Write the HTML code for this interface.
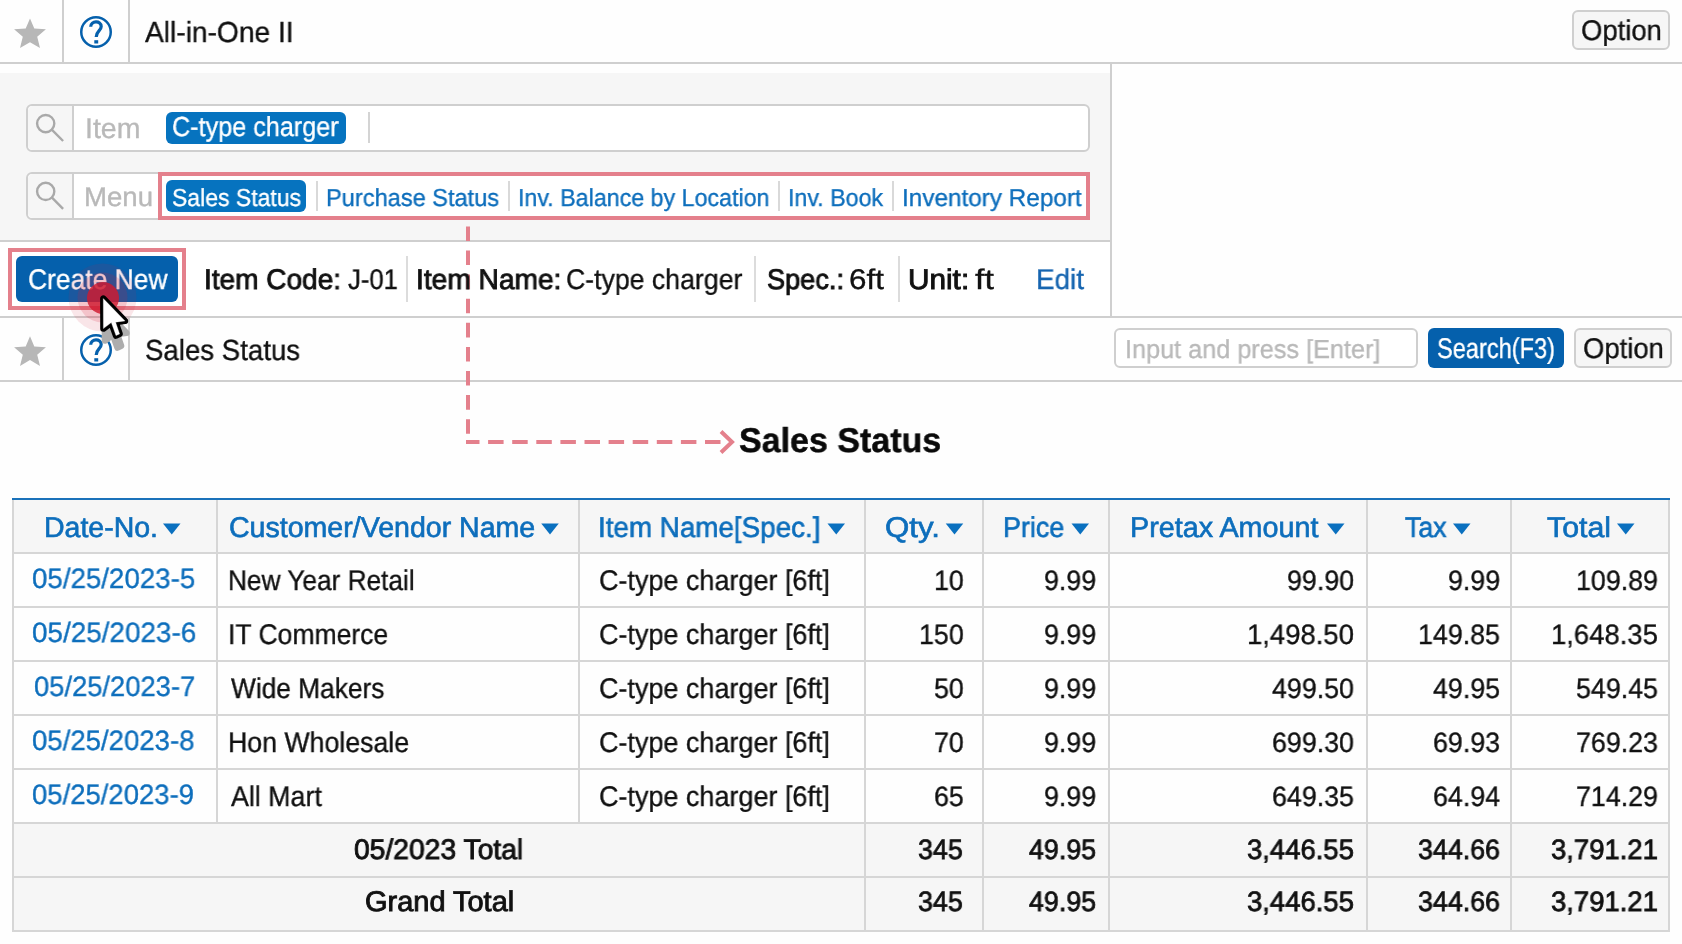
<!DOCTYPE html>
<html><head><meta charset="utf-8"><title>Sales Status</title>
<style>
html,body{margin:0;padding:0;}
body{width:1682px;height:944px;position:relative;overflow:hidden;background:#fefefe;font-family:"Liberation Sans", sans-serif;}
.b{position:absolute;}
.t{position:absolute;white-space:pre;line-height:1;transform-origin:0 0;display:block;font-family:"Liberation Sans", sans-serif;will-change:transform;text-rendering:geometricPrecision;}
.ov{position:absolute;left:0;top:0;}
</style></head><body>
<div class="b" style="left:0px;top:62px;width:1682px;height:2px;background:#cfcfcf"></div>
<div class="b" style="left:62px;top:0px;width:2px;height:63px;background:#cfcfcf"></div>
<div class="b" style="left:128px;top:0px;width:2px;height:63px;background:#cfcfcf"></div>
<div class="b" style="left:1572px;top:10px;width:98px;height:40px;box-sizing:border-box;border:2px solid #cfcfcf;border-radius:6px;background:#f6f6f6"></div>
<div class="b" style="left:0px;top:73px;width:1110px;height:168px;background:#f6f6f6"></div>
<div class="b" style="left:1110px;top:63px;width:2px;height:254px;background:#cfcfcf"></div>
<div class="b" style="left:0px;top:240px;width:1111px;height:2px;background:#cfcfcf"></div>
<div class="b" style="left:0px;top:242px;width:1110px;height:74px;background:#fff"></div>
<div class="b" style="left:0px;top:316px;width:1682px;height:2px;background:#cfcfcf"></div>
<div class="b" style="left:0px;top:380px;width:1682px;height:2px;background:#cfcfcf"></div>
<div class="b" style="left:62px;top:318px;width:2px;height:62px;background:#cfcfcf"></div>
<div class="b" style="left:128px;top:318px;width:2px;height:62px;background:#cfcfcf"></div>
<div class="b" style="left:26px;top:104px;width:1064px;height:48px;box-sizing:border-box;border:2px solid #cfcfcf;border-radius:6px;background:#fff;overflow:hidden"></div>
<div class="b" style="left:28px;top:106px;width:44px;height:44px;background:#f6f6f6;border-radius:5px 0 0 5px"></div>
<div class="b" style="left:72px;top:106px;width:2px;height:44px;background:#cfcfcf"></div>
<div class="b" style="left:26px;top:172px;width:1064px;height:48px;box-sizing:border-box;border:2px solid #cfcfcf;border-radius:6px;background:#fff;overflow:hidden"></div>
<div class="b" style="left:28px;top:174px;width:44px;height:44px;background:#f6f6f6;border-radius:5px 0 0 5px"></div>
<div class="b" style="left:72px;top:174px;width:2px;height:44px;background:#cfcfcf"></div>
<div class="b" style="left:166px;top:112px;width:180px;height:32px;background:#0673bf;border-radius:6px"></div>
<div class="b" style="left:368px;top:112px;width:2px;height:31px;background:#d4d4d4"></div>
<div class="b" style="left:158px;top:172px;width:932px;height:48px;box-sizing:border-box;border:4px solid #e4808c;background:#fff"></div>
<div class="b" style="left:166px;top:180px;width:140px;height:32px;background:#0673bf;border-radius:6px"></div>
<div class="b" style="left:316px;top:180.5px;width:2px;height:30.5px;background:#d9d9d9"></div>
<div class="b" style="left:508px;top:180.5px;width:2px;height:30.5px;background:#d9d9d9"></div>
<div class="b" style="left:778.25px;top:180.5px;width:2px;height:30.5px;background:#d9d9d9"></div>
<div class="b" style="left:892.25px;top:180.5px;width:2px;height:30.5px;background:#d9d9d9"></div>
<div class="b" style="left:8px;top:248px;width:178px;height:62px;box-sizing:border-box;border:4px solid #e4808c;background:#fff"></div>
<div class="b" style="left:16px;top:256px;width:162px;height:46px;background:#0560ac;border-radius:6px"></div>
<div class="b" style="left:406px;top:256px;width:2px;height:45.5px;background:#dcdcdc"></div>
<div class="b" style="left:754px;top:256px;width:2px;height:45.5px;background:#dcdcdc"></div>
<div class="b" style="left:898px;top:256px;width:2px;height:45.5px;background:#dcdcdc"></div>
<div class="b" style="left:1114px;top:328px;width:304px;height:40px;box-sizing:border-box;border:2px solid #cfcfcf;border-radius:6px;background:#fff"></div>
<div class="b" style="left:1428px;top:328px;width:136px;height:40px;background:#0560ac;border-radius:6px"></div>
<div class="b" style="left:1574px;top:328px;width:98px;height:40px;box-sizing:border-box;border:2px solid #cfcfcf;border-radius:6px;background:#f6f6f6"></div>
<div class="b" style="left:13px;top:499px;width:1656px;height:54px;background:#f6f6f6"></div>
<div class="b" style="left:13px;top:823px;width:1656px;height:108px;background:#f6f6f6"></div>
<div class="b" style="left:12px;top:498px;width:1658px;height:2px;background:#1a72ba"></div>
<div class="b" style="left:12px;top:552px;width:1658px;height:2px;background:#d6d6d6"></div>
<div class="b" style="left:12px;top:606px;width:1658px;height:2px;background:#d6d6d6"></div>
<div class="b" style="left:12px;top:660px;width:1658px;height:2px;background:#d6d6d6"></div>
<div class="b" style="left:12px;top:714px;width:1658px;height:2px;background:#d6d6d6"></div>
<div class="b" style="left:12px;top:768px;width:1658px;height:2px;background:#d6d6d6"></div>
<div class="b" style="left:12px;top:822px;width:1658px;height:2px;background:#d6d6d6"></div>
<div class="b" style="left:12px;top:876px;width:1658px;height:2px;background:#d6d6d6"></div>
<div class="b" style="left:12px;top:930px;width:1658px;height:2px;background:#d6d6d6"></div>
<div class="b" style="left:12px;top:500px;width:2px;height:432px;background:#d6d6d6"></div>
<div class="b" style="left:1668px;top:500px;width:2px;height:432px;background:#d6d6d6"></div>
<div class="b" style="left:216px;top:500px;width:2px;height:323px;background:#d6d6d6"></div>
<div class="b" style="left:578px;top:500px;width:2px;height:323px;background:#d6d6d6"></div>
<div class="b" style="left:864px;top:500px;width:2px;height:431px;background:#d6d6d6"></div>
<div class="b" style="left:982.25px;top:500px;width:2px;height:431px;background:#d6d6d6"></div>
<div class="b" style="left:1108.25px;top:500px;width:2px;height:431px;background:#d6d6d6"></div>
<div class="b" style="left:1366px;top:500px;width:2px;height:431px;background:#d6d6d6"></div>
<div class="b" style="left:1509.75px;top:500px;width:2px;height:431px;background:#d6d6d6"></div>
<svg class="ov" width="1682" height="944" viewBox="0 0 1682 944">
<g fill="none" stroke="#e4808c" stroke-width="4"><path d="M468,226.4 V442" stroke-dasharray="14.6 9.5"/><path d="M466,442 H721" stroke-dasharray="15.5 8.6" stroke-dashoffset="2"/><path d="M721,431.5 L732,442 L721,452.5" stroke-linejoin="miter"/></g></svg>
<span class="t" style="left:144.57px;top:19px;font-size:29px;color:#111;transform:scaleX(0.9710);-webkit-text-stroke:0.35px #111;">All-in-One II</span>
<span class="t" style="left:1580.71px;top:17px;font-size:28.5px;color:#111;transform:scaleX(0.9636);-webkit-text-stroke:0.35px #111;">Option</span>
<span class="t" style="left:84.69px;top:115px;font-size:28.5px;color:#b9b9b9;transform:scaleX(0.9935);-webkit-text-stroke:0.35px #b9b9b9;">Item</span>
<span class="t" style="left:172.24px;top:113px;font-size:27.5px;color:#fff;transform:scaleX(0.9154);-webkit-text-stroke:0.35px #fff;">C-type charger</span>
<span class="t" style="left:83.89px;top:184px;font-size:27px;color:#b9b9b9;transform:scaleX(1.0212);-webkit-text-stroke:0.35px #b9b9b9;">Menu</span>
<span class="t" style="left:172.23px;top:187px;font-size:24.5px;color:#fff;transform:scaleX(0.9385);-webkit-text-stroke:0.35px #fff;">Sales Status</span>
<span class="t" style="left:325.74px;top:187px;font-size:24.5px;color:#0d6ebc;transform:scaleX(0.9628);-webkit-text-stroke:0.35px #0d6ebc;">Purchase Status</span>
<span class="t" style="left:517.77px;top:187px;font-size:24.5px;color:#0d6ebc;transform:scaleX(0.9482);-webkit-text-stroke:0.35px #0d6ebc;">Inv. Balance by Location</span>
<span class="t" style="left:787.77px;top:187px;font-size:24.5px;color:#0d6ebc;transform:scaleX(0.9480);-webkit-text-stroke:0.35px #0d6ebc;">Inv. Book</span>
<span class="t" style="left:901.94px;top:187px;font-size:24.5px;color:#0d6ebc;transform:scaleX(0.9921);-webkit-text-stroke:0.35px #0d6ebc;">Inventory Report</span>
<span class="t" style="left:27.99px;top:266px;font-size:28.5px;color:#fff;transform:scaleX(0.9268);-webkit-text-stroke:0.35px #fff;">Create New</span>
<span class="t" style="left:203.98px;top:266px;font-size:28.5px;color:#111;transform:scaleX(0.9826);-webkit-text-stroke:0.9px #111;">Item Code:</span>
<span class="t" style="left:347.66px;top:266px;font-size:28.5px;color:#111;transform:scaleX(0.9010);-webkit-text-stroke:0.35px #111;">J-01</span>
<span class="t" style="left:415.97px;top:266px;font-size:28.5px;color:#111;transform:scaleX(0.9877);-webkit-text-stroke:0.9px #111;">Item Name:</span>
<span class="t" style="left:566.23px;top:266px;font-size:28.5px;color:#111;transform:scaleX(0.9357);-webkit-text-stroke:0.35px #111;">C-type charger</span>
<span class="t" style="left:766.98px;top:266px;font-size:28.5px;color:#111;transform:scaleX(0.9520);-webkit-text-stroke:0.9px #111;">Spec.:</span>
<span class="t" style="left:848.59px;top:266px;font-size:28.5px;color:#111;transform:scaleX(1.1006);-webkit-text-stroke:0.35px #111;">6ft</span>
<span class="t" style="left:908.38px;top:266px;font-size:28.5px;color:#111;transform:scaleX(1.0435);-webkit-text-stroke:0.9px #111;">Unit:</span>
<span class="t" style="left:975.21px;top:266px;font-size:28.5px;color:#111;transform:scaleX(1.1987);-webkit-text-stroke:0.35px #111;">ft</span>
<span class="t" style="left:1036.21px;top:266px;font-size:28.5px;color:#1665b0;transform:scaleX(0.9781);-webkit-text-stroke:0.35px #1665b0;">Edit</span>
<span class="t" style="left:144.71px;top:337px;font-size:29px;color:#111;transform:scaleX(0.9526);-webkit-text-stroke:0.35px #111;">Sales Status</span>
<span class="t" style="left:1125.23px;top:336px;font-size:26px;color:#b9b9b9;transform:scaleX(0.9709);-webkit-text-stroke:0.35px #b9b9b9;">Input and press [Enter]</span>
<span class="t" style="left:1436.62px;top:335px;font-size:28.5px;color:#fff;transform:scaleX(0.8276);-webkit-text-stroke:0.35px #fff;">Search(F3)</span>
<span class="t" style="left:1582.71px;top:335px;font-size:28.5px;color:#111;transform:scaleX(0.9636);-webkit-text-stroke:0.35px #111;">Option</span>
<span class="t" style="left:739.26px;top:424px;font-size:34.5px;color:#0a0a0a;transform:scaleX(0.9853);font-weight:700;-webkit-text-stroke:0.5px #0a0a0a;">Sales Status</span>
<span class="t" style="left:44.08px;top:514px;font-size:28.5px;color:#0d6ebc;transform:scaleX(0.9975);-webkit-text-stroke:0.65px #0d6ebc;">Date-No.</span>
<span class="t" style="left:228.82px;top:514px;font-size:28.5px;color:#0d6ebc;transform:scaleX(1.0016);-webkit-text-stroke:0.65px #0d6ebc;">Customer/Vendor Name</span>
<span class="t" style="left:597.87px;top:514px;font-size:28.5px;color:#0d6ebc;transform:scaleX(0.9752);-webkit-text-stroke:0.65px #0d6ebc;">Item Name[Spec.]</span>
<span class="t" style="left:884.76px;top:514px;font-size:28.5px;color:#0d6ebc;transform:scaleX(1.0967);-webkit-text-stroke:0.65px #0d6ebc;">Qty.</span>
<span class="t" style="left:1002.92px;top:514px;font-size:28.5px;color:#0d6ebc;transform:scaleX(0.9445);-webkit-text-stroke:0.65px #0d6ebc;">Price</span>
<span class="t" style="left:1129.56px;top:514px;font-size:28.5px;color:#0d6ebc;transform:scaleX(1.0081);-webkit-text-stroke:0.65px #0d6ebc;">Pretax Amount</span>
<span class="t" style="left:1405.31px;top:514px;font-size:28.5px;color:#0d6ebc;transform:scaleX(0.9385);-webkit-text-stroke:0.65px #0d6ebc;">Tax</span>
<span class="t" style="left:1547.35px;top:514px;font-size:28.5px;color:#0d6ebc;transform:scaleX(1.0627);-webkit-text-stroke:0.65px #0d6ebc;">Total</span>
<span class="t" style="left:32.08px;top:565px;font-size:28px;color:#0d6ebc;transform:scaleX(0.9889);-webkit-text-stroke:0.35px #0d6ebc;">05/25/2023-5</span>
<span class="t" style="left:228.12px;top:567px;font-size:28.5px;color:#111;transform:scaleX(0.9205);-webkit-text-stroke:0.35px #111;">New Year Retail</span>
<span class="t" style="left:598.72px;top:567px;font-size:28.5px;color:#111;transform:scaleX(0.9467);-webkit-text-stroke:0.35px #111;">C-type charger [6ft]</span>
<span class="t" style="left:933.57px;top:567px;font-size:28px;color:#111;transform:scaleX(0.9570);-webkit-text-stroke:0.35px #111;">10</span>
<span class="t" style="left:1044.23px;top:567px;font-size:28px;color:#111;transform:scaleX(0.9570);-webkit-text-stroke:0.35px #111;">9.99</span>
<span class="t" style="left:1287.07px;top:567px;font-size:28px;color:#111;transform:scaleX(0.9570);-webkit-text-stroke:0.35px #111;">99.90</span>
<span class="t" style="left:1447.73px;top:567px;font-size:28px;color:#111;transform:scaleX(0.9570);-webkit-text-stroke:0.35px #111;">9.99</span>
<span class="t" style="left:1576.42px;top:567px;font-size:28px;color:#111;transform:scaleX(0.9570);-webkit-text-stroke:0.35px #111;">109.89</span>
<span class="t" style="left:32.08px;top:619px;font-size:28px;color:#0d6ebc;transform:scaleX(0.9950);-webkit-text-stroke:0.35px #0d6ebc;">05/25/2023-6</span>
<span class="t" style="left:228.10px;top:621px;font-size:28.5px;color:#111;transform:scaleX(0.9306);-webkit-text-stroke:0.35px #111;">IT Commerce</span>
<span class="t" style="left:598.72px;top:621px;font-size:28.5px;color:#111;transform:scaleX(0.9467);-webkit-text-stroke:0.35px #111;">C-type charger [6ft]</span>
<span class="t" style="left:918.67px;top:621px;font-size:28px;color:#111;transform:scaleX(0.9570);-webkit-text-stroke:0.35px #111;">150</span>
<span class="t" style="left:1044.23px;top:621px;font-size:28px;color:#111;transform:scaleX(0.9570);-webkit-text-stroke:0.35px #111;">9.99</span>
<span class="t" style="left:1247.23px;top:621px;font-size:28px;color:#111;transform:scaleX(0.9809);-webkit-text-stroke:0.35px #111;">1,498.50</span>
<span class="t" style="left:1417.92px;top:621px;font-size:28px;color:#111;transform:scaleX(0.9570);-webkit-text-stroke:0.35px #111;">149.85</span>
<span class="t" style="left:1551.48px;top:621px;font-size:28px;color:#111;transform:scaleX(0.9809);-webkit-text-stroke:0.35px #111;">1,648.35</span>
<span class="t" style="left:34.09px;top:673px;font-size:28px;color:#0d6ebc;transform:scaleX(0.9767);-webkit-text-stroke:0.35px #0d6ebc;">05/25/2023-7</span>
<span class="t" style="left:231.36px;top:675px;font-size:28.5px;color:#111;transform:scaleX(0.9226);-webkit-text-stroke:0.35px #111;">Wide Makers</span>
<span class="t" style="left:598.72px;top:675px;font-size:28.5px;color:#111;transform:scaleX(0.9467);-webkit-text-stroke:0.35px #111;">C-type charger [6ft]</span>
<span class="t" style="left:933.57px;top:675px;font-size:28px;color:#111;transform:scaleX(0.9570);-webkit-text-stroke:0.35px #111;">50</span>
<span class="t" style="left:1044.23px;top:675px;font-size:28px;color:#111;transform:scaleX(0.9570);-webkit-text-stroke:0.35px #111;">9.99</span>
<span class="t" style="left:1272.17px;top:675px;font-size:28px;color:#111;transform:scaleX(0.9570);-webkit-text-stroke:0.35px #111;">499.50</span>
<span class="t" style="left:1432.82px;top:675px;font-size:28px;color:#111;transform:scaleX(0.9570);-webkit-text-stroke:0.35px #111;">49.95</span>
<span class="t" style="left:1576.42px;top:675px;font-size:28px;color:#111;transform:scaleX(0.9570);-webkit-text-stroke:0.35px #111;">549.45</span>
<span class="t" style="left:32.44px;top:727px;font-size:28px;color:#0d6ebc;transform:scaleX(0.9844);-webkit-text-stroke:0.35px #0d6ebc;">05/25/2023-8</span>
<span class="t" style="left:228.29px;top:729px;font-size:28.5px;color:#111;transform:scaleX(0.9370);-webkit-text-stroke:0.35px #111;">Hon Wholesale</span>
<span class="t" style="left:598.72px;top:729px;font-size:28.5px;color:#111;transform:scaleX(0.9467);-webkit-text-stroke:0.35px #111;">C-type charger [6ft]</span>
<span class="t" style="left:933.57px;top:729px;font-size:28px;color:#111;transform:scaleX(0.9570);-webkit-text-stroke:0.35px #111;">70</span>
<span class="t" style="left:1044.23px;top:729px;font-size:28px;color:#111;transform:scaleX(0.9570);-webkit-text-stroke:0.35px #111;">9.99</span>
<span class="t" style="left:1272.17px;top:729px;font-size:28px;color:#111;transform:scaleX(0.9570);-webkit-text-stroke:0.35px #111;">699.30</span>
<span class="t" style="left:1432.82px;top:729px;font-size:28px;color:#111;transform:scaleX(0.9570);-webkit-text-stroke:0.35px #111;">69.93</span>
<span class="t" style="left:1576.42px;top:729px;font-size:28px;color:#111;transform:scaleX(0.9570);-webkit-text-stroke:0.35px #111;">769.23</span>
<span class="t" style="left:32.44px;top:781px;font-size:28px;color:#0d6ebc;transform:scaleX(0.9813);-webkit-text-stroke:0.35px #0d6ebc;">05/25/2023-9</span>
<span class="t" style="left:230.66px;top:783px;font-size:28.5px;color:#111;transform:scaleX(0.9405);-webkit-text-stroke:0.35px #111;">All Mart</span>
<span class="t" style="left:598.72px;top:783px;font-size:28.5px;color:#111;transform:scaleX(0.9467);-webkit-text-stroke:0.35px #111;">C-type charger [6ft]</span>
<span class="t" style="left:933.57px;top:783px;font-size:28px;color:#111;transform:scaleX(0.9570);-webkit-text-stroke:0.35px #111;">65</span>
<span class="t" style="left:1044.23px;top:783px;font-size:28px;color:#111;transform:scaleX(0.9570);-webkit-text-stroke:0.35px #111;">9.99</span>
<span class="t" style="left:1272.17px;top:783px;font-size:28px;color:#111;transform:scaleX(0.9570);-webkit-text-stroke:0.35px #111;">649.35</span>
<span class="t" style="left:1432.82px;top:783px;font-size:28px;color:#111;transform:scaleX(0.9570);-webkit-text-stroke:0.35px #111;">64.94</span>
<span class="t" style="left:1576.42px;top:783px;font-size:28px;color:#111;transform:scaleX(0.9570);-webkit-text-stroke:0.35px #111;">714.29</span>
<span class="t" style="left:354.45px;top:836px;font-size:28.5px;color:#111;transform:scaleX(0.9914);-webkit-text-stroke:0.9px #111;">05/2023 Total</span>
<span class="t" style="left:918.46px;top:836px;font-size:28px;color:#111;transform:scaleX(0.9570);-webkit-text-stroke:0.8px #111;">345</span>
<span class="t" style="left:1029.11px;top:836px;font-size:28px;color:#111;transform:scaleX(0.9570);-webkit-text-stroke:0.8px #111;">49.95</span>
<span class="t" style="left:1247.01px;top:836px;font-size:28px;color:#111;transform:scaleX(0.9809);-webkit-text-stroke:0.8px #111;">3,446.55</span>
<span class="t" style="left:1417.71px;top:836px;font-size:28px;color:#111;transform:scaleX(0.9570);-webkit-text-stroke:0.8px #111;">344.66</span>
<span class="t" style="left:1551.26px;top:836px;font-size:28px;color:#111;transform:scaleX(0.9809);-webkit-text-stroke:0.8px #111;">3,791.21</span>
<span class="t" style="left:364.94px;top:888px;font-size:28.5px;color:#111;transform:scaleX(1.0161);-webkit-text-stroke:0.9px #111;">Grand Total</span>
<span class="t" style="left:918.46px;top:888px;font-size:28px;color:#111;transform:scaleX(0.9570);-webkit-text-stroke:0.8px #111;">345</span>
<span class="t" style="left:1029.11px;top:888px;font-size:28px;color:#111;transform:scaleX(0.9570);-webkit-text-stroke:0.8px #111;">49.95</span>
<span class="t" style="left:1247.01px;top:888px;font-size:28px;color:#111;transform:scaleX(0.9809);-webkit-text-stroke:0.8px #111;">3,446.55</span>
<span class="t" style="left:1417.71px;top:888px;font-size:28px;color:#111;transform:scaleX(0.9570);-webkit-text-stroke:0.8px #111;">344.66</span>
<span class="t" style="left:1551.26px;top:888px;font-size:28px;color:#111;transform:scaleX(0.9809);-webkit-text-stroke:0.8px #111;">3,791.21</span>
<svg class="ov" width="1682" height="944" viewBox="0 0 1682 944">
<polygon points="30,18.4 34.3,28.5 45.9,29.3 37.2,36.8 40,48.1 30,42.2 20,48.1 22.8,36.8 14.1,29.3 25.7,28.5" fill="#b7b7b7"/>
<polygon points="30.0, 336.29999999999995 34.3, 346.4 45.9, 347.2 37.2, 354.7 40.0, 366.0 30.0, 360.09999999999997 20.0, 366.0 22.8, 354.7 14.1, 347.2 25.7, 346.4" fill="#b7b7b7"/>
<g fill="none" stroke="#0560ac" stroke-linecap="butt"><circle cx="96" cy="32" r="14.75" stroke-width="2.5"/><path d="M90.7,26.8 C90.7,20.5 101.2,20.2 101.2,26.4 C101.2,30.8 96.2,31.2 96.2,36.9" stroke-width="3.2"/></g><rect x="94.3" y="40.2" width="3.9" height="3.3" fill="#0560ac"/>
<g fill="none" stroke="#0560ac" stroke-linecap="butt"><circle cx="96" cy="350" r="14.75" stroke-width="2.5"/><path d="M90.7,344.8 C90.7,338.5 101.2,338.2 101.2,344.4 C101.2,348.8 96.2,349.2 96.2,354.9" stroke-width="3.2"/></g><rect x="94.3" y="358.2" width="3.9" height="3.3" fill="#0560ac"/>
<g fill="none" stroke="#a9a9a9" stroke-width="2.4"><circle cx="45.7" cy="123.6" r="8.6"/><path d="M52.0,129.9 L63.1,141.0"/></g>
<g fill="none" stroke="#a9a9a9" stroke-width="2.4"><circle cx="45.7" cy="191.4" r="8.6"/><path d="M52.0,197.70000000000002 L63.1,208.8"/></g>
<polygon points="163,523.6 180.5,523.6 171.75,534.4" fill="#0a70bf"/>
<polygon points="541.25,523.6 558.75,523.6 550.0,534.4" fill="#0a70bf"/>
<polygon points="827.5,523.6 845.0,523.6 836.25,534.4" fill="#0a70bf"/>
<polygon points="945.75,523.6 963.25,523.6 954.5,534.4" fill="#0a70bf"/>
<polygon points="1071.5,523.6 1089.0,523.6 1080.25,534.4" fill="#0a70bf"/>
<polygon points="1327,523.6 1344.5,523.6 1335.75,534.4" fill="#0a70bf"/>
<polygon points="1453,523.6 1470.5,523.6 1461.75,534.4" fill="#0a70bf"/>
<polygon points="1617,523.6 1634.5,523.6 1625.75,534.4" fill="#0a70bf"/>
<circle cx="102.5" cy="297.5" r="34" fill="#d61a33" fill-opacity="0.11"/>
<circle cx="102.5" cy="297.5" r="25" fill="#d61a33" fill-opacity="0.17"/>
<circle cx="103" cy="298" r="16" fill="#cf1a30" fill-opacity="0.82"/>
<path d="M103.30,298.60 L103.40,328.60 L111.30,322.60 L116.00,335.60 L119.60,333.90 L115.60,322.20 L125.00,320.90 Z" transform="translate(1.5,12)" fill="#adadad" stroke="#adadad" stroke-width="6.4" stroke-linejoin="round"/>
<path d="M103.30,298.60 L103.40,328.60 L111.30,322.60 L116.00,335.60 L119.60,333.90 L115.60,322.20 L125.00,320.90 Z" fill="#000" stroke="#000" stroke-width="6.4" stroke-linejoin="round"/>
<path d="M103.30,298.60 L103.40,328.60 L111.30,322.60 L116.00,335.60 L119.60,333.90 L115.60,322.20 L125.00,320.90 Z" fill="#fff" stroke="#fff" stroke-width="0.3" stroke-linejoin="miter"/>
</svg>
</body></html>
